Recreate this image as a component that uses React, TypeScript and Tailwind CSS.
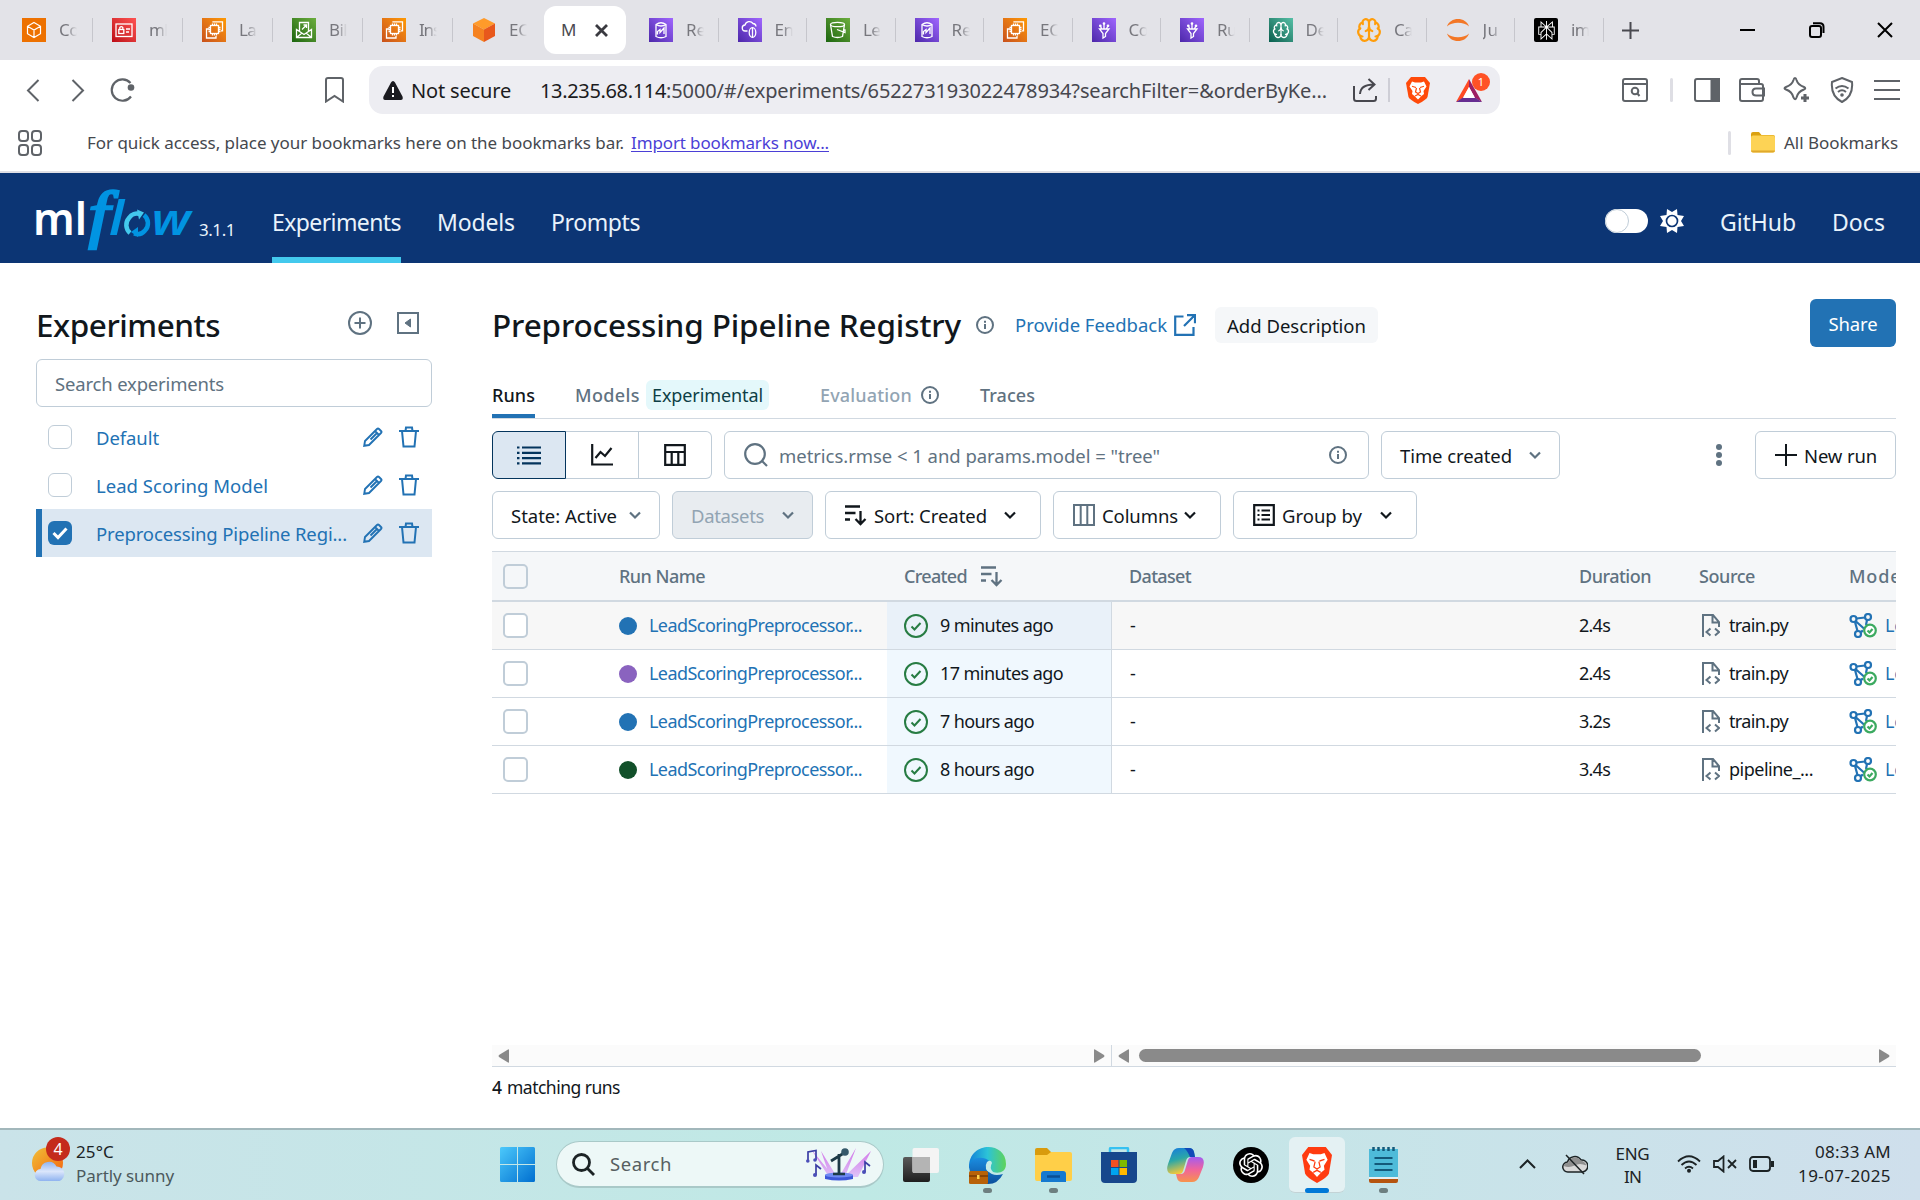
import React, { useLayoutEffect, useRef } from "react";
import { SiOpenai, SiPerplexity } from "react-icons/si";
import { Brain } from "lucide-react";

type P = { children?: React.ReactNode; className?: string };

/* Single-line label whose tracking is adjusted so that it fills width `w`. */
function T({ w, className = "", children }: P & { w: number }) {
  const ref = useRef<HTMLSpanElement>(null);
  useLayoutEffect(() => {
    const el = ref.current;
    if (!el) return;
    el.style.letterSpacing = "0px";
    const n = (el.textContent || "").length;
    el.style.letterSpacing = `${(w - el.getBoundingClientRect().width) / n}px`;
  }, [w]);
  return (
    <span className={"block shrink-0 whitespace-nowrap " + className} style={{ width: w }}>
      <span ref={ref} className="inline-block whitespace-pre">{children}</span>
    </span>
  );
}

function I({ w = 24, h = w, vb, className = "", sw = 2, children }: P & { w?: number; h?: number; vb?: string; sw?: number }) {
  return (
    <svg width={w} height={h} viewBox={vb || `0 0 ${w} ${h}`} fill="none" stroke="currentColor" strokeWidth={sw} className={"block shrink-0 " + className}>
      {children}
    </svg>
  );
}

/* ---------- tab favicons ---------- */
const Chip = ({ className = "" }: P) => (
  <I sw={1.3} className={"text-white bg-linear-to-tr from-[#c8511b] to-[#ff9900] " + className}>
    <rect x="8.5" y="7.5" width="8" height="8" />
    <path d="M10.5 5.5v2M12.5 5.5v2M14.5 5.5v2M10.5 15.5v2M12.5 15.5v2M14.5 15.5v2M6.5 9.5h2M6.5 11.5h2M6.5 13.5h2M16.5 9.5h2M16.5 11.5h2M16.5 13.5h2" />
    <path d="M11 4.500v-.7h9.500v9H19M7 11H4.500v9h9.500v-2" />
  </I>
);
const Cube = () => (
  <I sw={1.2} className="text-white bg-[#ed7100]"><path d="M12 4.500l6.500 3.800v7.400L12 19.500l-6.500-3.800V8.300zM5.500 8.300L12 12l6.500-3.700M12 12v7.500" /></I>
);
const Card = () => (
  <I sw={1.3} className="text-white bg-linear-to-tr from-[#bd0816] to-[#ff5252]"><rect x="4" y="6" width="16" height="12.500" /><rect x="6.800" y="11.500" width="5" height="4" /><path d="M7.800 11.500V9.500q1.500-1.800 3 0v2M14 11h4M14 14h3" /></I>
);
const Mail = () => (
  <I sw={1.3} className="text-white bg-linear-to-tr from-[#1b660f] to-[#6cae3e]"><path d="M7.500 13V4.500h9V13M4.500 11.500v8h15v-8l-7.500 5zM4.500 19.500l5.500-4.500M19.500 19.500L14 15M10 11.500l4.500-4.500M11.500 7h3v3" /></I>
);
const BigCube = () => (
  <I sw={0}><path d="M12 0l11 5.500-11 6L1 5.500z" fill="#ff9b2a" /><path d="M1 5.500l11 6V24L1 18z" fill="#f58220" /><path d="M23 5.500l-11 6V24l11-6z" fill="#e8581c" /></I>
);
const Jar = () => (
  <I sw={1.3} className="text-white bg-linear-to-tr from-[#4d27aa] to-[#a166ff]"><path d="M7 6.500q5-3.500 10 0v12q-5 2.500-10 0zM7 6.500q5 3 10 0M8.500 16.500v-3l2.500-2v3l4-4.500v6" /></I>
);
const CloudI = () => (
  <I sw={1.3} className="text-white bg-linear-to-tr from-[#4d27aa] to-[#a166ff]"><path d="M9.500 13H7.500a3 3 0 01-.5-6 4.500 4.500 0 018-1.500q2.800.2 3 3" /><ellipse cx="14.500" cy="14.500" rx="3.300" ry="4.800" /><path d="M14.500 9.500v10" /></I>
);
const Bucket = () => (
  <I sw={1.3} className="text-white bg-linear-to-tr from-[#1b660f] to-[#6cae3e]"><ellipse cx="11.500" cy="6.500" rx="7" ry="2.200" /><path d="M4.500 6.500l2 12q5 2 10 0l2-12M11 11.500l8 3v-2.500h-2" /></I>
);
const Glue = () => (
  <I sw={1.3} className="text-white bg-linear-to-tr from-[#4d27aa] to-[#a166ff]"><path d="M7.500 11h9.500l-3.500 4.500v3l-2.500 1.500v-4.500zM9.500 10.500L8.500 8M12 10.500V5M14.500 10.500L16 8" /><circle cx="12" cy="5.500" r=".7" /><circle cx="8.300" cy="7.800" r=".7" /><circle cx="16" cy="7.800" r=".7" /></I>
);
const BrainBox = () => (
  <span className="flex size-6 items-center justify-center bg-linear-to-tr from-[#055f4e] to-[#56c0a7] text-white"><Brain size={18} strokeWidth={1.700} /></span>
);
const BrainO = () => <Brain size={26} strokeWidth={2} className="-ml-px shrink-0 text-[#ff9d0a]" />;
const Jup = () => (
  <I sw={0}><path d="M1 8.500C4-1.500 20-1.500 23 8.500 18 3.500 6 3.500 1 8.500zM1 15.500c3 10 19 10 22 0-5 5-17 5-22 0z" fill="#f37726" /></I>
);
const Perp = () => (
  <span className="flex size-6 items-center justify-center rounded-xs bg-black text-white"><SiPerplexity size={19} /></span>
);

function Tab({ icon, t, w, cls, last }: { icon: React.ReactNode; t: string; w: number; cls: string; last?: boolean }) {
  return (
    <div className={"flex h-full shrink-0 items-center pl-[19px] " + cls}>
      <div className="w-6 shrink-0">{icon}</div>
      <div className="ml-[13px] w-[18px] overflow-hidden text-[17px] text-[#77777d] [mask-image:linear-gradient(to_right,#000_45%,transparent)]"><T w={w}>{t}</T></div>
      {!last && <div className="ml-auto h-6 w-px bg-[#c6c6cc]" />}
    </div>
  );
}

const Info = ({ className = "" }: P) => (
  <I w={18} className={className}><circle cx="9" cy="9" r="8" /><path d="M9 8v5M9 4.800v2" /></I>
);
const Chev = ({ className = "" }: P) => <I w={12} h={9} sw={2.200} className={className}><path d="M1 1.500l5 5 5-5" /></I>;
const SortI = () => <I w={22} h={21} sw={2.300}><path d="M0 1.500h15M0 8h10.500M0 14.500h5M15.500 6v13M10.500 14l5 5 5-5" /></I>;
const Pencil = () => <I w={20} h={20} sw={1.900}><path d="M1.200 18.800l.8-4.800L14 2q1-1 2 0l2 2q1 1 0 2L6 18zM12 4l4 4M14 6l-6.500 6.500" /></I>;
const Trash = () => <I w={20} h={22} sw={2}><path d="M0 5h20M3 5l1.500 15.500h11L17 5M6.500 5l.5-3.500h6l.5 3.500" /></I>;

const btn = "flex h-12 shrink-0 items-center rounded-md border border-[#c0cdd8] bg-white text-[18.5px] text-[#11171c] [&>span]:pt-[1.500px] ";

function Exp({ t, w, on }: { t: string; w: number; on?: boolean }) {
  return (
    <div className={"flex h-12 items-center text-[#2272b4] " + (on ? "border-l-[6px] border-[#2272b4] bg-[#dce7f2] pl-1.5" : "pl-3")}>
      {on ? (
        <div className="flex size-6 items-center justify-center rounded-md bg-[#2272b4] text-white"><I w={16} h={13} sw={3}><path d="M1.500 6l4.500 4.500L14.500 1.500" /></I></div>
      ) : (
        <div className="size-6 rounded-md border-[1.500px] border-[#c0cdd8] bg-white" />
      )}
      <T w={w} className="ml-6 pt-[1.500px] text-[18.5px]">{t}</T>
      <div className="mr-[13px] ml-auto flex items-center gap-4"><Pencil /><Trash /></div>
    </div>
  );
}

const rows = [
  { c: "bg-[#2272b4]", a: "9 minutes ago", aw: 113, d: "2.4s", s: "train.py", sw: 59 },
  { c: "bg-[#8a63bf]", a: "17 minutes ago", aw: 123, d: "2.4s", s: "train.py", sw: 59 },
  { c: "bg-[#2272b4]", a: "7 hours ago", aw: 94, d: "3.2s", s: "train.py", sw: 59 },
  { c: "bg-[#12502a]", a: "8 hours ago", aw: 94, d: "3.4s", s: "pipeline_...", sw: 84 },
];

const Box = () => <div className="ml-[11px] size-[25px] shrink-0 rounded-[5px] border-2 border-[#c0cdd8] bg-white" />;
const ArrL = () => <I w={11} h={14} sw={0}><path d="M11 1v12q0 1-1 .5L1 8Q0 7 1 6L10 .5q1-.5 1 .5z" fill="#8a8a8a" /></I>;
const ArrR = () => <I w={11} h={14} sw={0}><path d="M0 1v12q0 1 1 .5L10 8q1-1 0-2L1 .5Q0 0 0 1z" fill="#8a8a8a" /></I>;

function Browser() {
  return (
    <>
      <div className="flex h-[60px] bg-[#e3e3e8] pl-[3px]">
        <Tab cls="w-[90px]" icon={<Cube />} t="Co" w={20} />
        <Tab cls="w-[90px]" icon={<Card />} t="ml" w={19} />
        <Tab cls="w-[90px]" icon={<Chip />} t="La" w={17} />
        <Tab cls="w-[90px]" icon={<Mail />} t="Bil" w={18} />
        <Tab cls="w-[90px]" icon={<Chip />} t="Ins" w={21} />
        <Tab cls="w-[90px]" icon={<BigCube />} t="EC" w={20} last />
        <div className="mt-1.5 ml-px flex h-12 w-[82px] items-center rounded-xl bg-white pl-[17px] text-[#4a4a50]">
          <T w={15} className="text-[17px]">M</T>
          <I w={13} sw={2.800} className="ml-[19px] text-[#3a3a40]"><path d="M1 1l11 11M12 1L1 12" /></I>
        </div>
        <div className="w-1" />
        <Tab cls="w-[88.5px]" icon={<Jar />} t="Re" w={20} />
        <Tab cls="w-[88.5px]" icon={<CloudI />} t="En" w={19} />
        <Tab cls="w-[88.5px]" icon={<Bucket />} t="Le" w={17} />
        <Tab cls="w-[88.5px]" icon={<Jar />} t="Re" w={20} />
        <Tab cls="w-[88.5px]" icon={<Chip />} t="EC" w={20} />
        <Tab cls="w-[88.5px]" icon={<Glue />} t="Co" w={20} />
        <Tab cls="w-[88.5px]" icon={<Glue />} t="Ru" w={20} />
        <Tab cls="w-[88.5px]" icon={<BrainBox />} t="De" w={21} />
        <Tab cls="w-[88.5px]" icon={<BrainO />} t="Ca" w={19} />
        <Tab cls="w-[88.5px]" icon={<Jup />} t="Ju" w={16} />
        <Tab cls="w-[88.5px]" icon={<Perp />} t="im" w={19} />
        <div className="ml-[18px] flex items-center text-[#4a4a50]"><I w={17}><path d="M8.500 0v17M0 8.500h17" /></I></div>
        <div className="ml-[101px] flex items-center text-black">
          <I w={15} h={2}><path d="M0 1h15" /></I>
          <I w={16} h={16} className="ml-[54px]"><rect x="1" y="4" width="11" height="11" rx="2" /><path d="M4 1.200h7q3.500 0 3.500 3.500V11" /></I>
          <I w={16} h={16} className="ml-[52px]"><path d="M1 1l14 14M15 1L1 15" /></I>
        </div>
      </div>

      <div className="flex h-[60px] items-center bg-white pl-[26px] text-[#5f6368]">
        <I w={14} h={23}><path d="M12.500 1L2 11.500 12.500 22" /></I>
        <I w={14} h={23} className="ml-[31px]"><path d="M1.500 1L12 11.500 1.500 22" /></I>
        <I w={26} h={24} sw={2.200} className="ml-6"><path d="M22 18.500A10.700 10.700 0 1 1 21.500 5" /><circle cx="22" cy="9.500" r="3.300" fill="currentColor" stroke="none" /></I>
        <I w={19} h={26} className="ml-[190px]"><path d="M1 3q0-2 2-2h13q2 0 2 2v21.500l-8.500-5.500L1 24.500z" /></I>
        <div className="ml-[25px] flex h-12 w-[1131px] items-center rounded-[14px] bg-[#ededf2] pl-[14px] text-[20px] text-[#1b1b20]">
          <I w={20} h={19} sw={0}><path d="M10 0q1.200 0 2 1.500l7.500 14q1 3.500-1.500 3.500H2Q-.5 19 .5 15.500L8 1.500Q8.800 0 10 0z" fill="#1b1b20" /><path d="M9 6h2v6H9zM9 14h2v2H9z" fill="#fff" /></I>
          <T w={100} className="ml-[8px] pt-px">Not secure</T>
          <T w={126} className="ml-[29px] pt-px">13.235.68.114</T>
          <T w={661} className="pt-px text-[#47474e]">:5000/#/experiments/652273193022478934?searchFilter=&amp;orderByKe...</T>
          <I w={24} h={24} className="ml-[26px] text-[#47474e]"><path d="M1 8v12.500q0 2.500 2.500 2.500h17q2.500 0 2.500-2.500V18M7 16q.5-9.500 14-9.500M15.500 1l6 5.500-6 5.500" /></I>
          <div className="ml-[11px] h-6 w-0.5 bg-[#ceced6]" />
          <svg width="24" height="27" viewBox="0 0 24 27" className="ml-4 shrink-0"><path d="M5 0h14l5 6-2.500 14q-1 2.500-9.500 7-8.500-4.500-9.500-7L0 6z" fill="#ff4a0a" /><path d="M6 4.500l3 1h6l3-1 2.500 5L17.500 14l.5 3-2.500 2L12 22.500 8.500 19 6 17l.5-3-3-4.500z" fill="#fff" /><path d="M6 9.300l4 1.200M18 9.300l-4 1.200M10.500 11l-1 4 2.500 1.500 2.500-1.500-1-4M9 19l3-1.500 3 1.500" stroke="#ff4a0a" strokeWidth="1.200" fill="none" /></svg>
          <div className="relative ml-[26px]">
            <I w={26} h={23} sw={0}><path d="M13 0L0 23l6.500-3.500L13 8z" fill="#ff4a24" /><path d="M13 0l13 23-7-4L13 8z" fill="#9e1f63" /><path d="M0 23h26l-7-4.500H7z" fill="#662d91" /><path d="M13 8l6 11H7z" fill="#fff" /></I>
            <div className="absolute -top-[6px] left-4 flex size-[18px] items-center justify-center rounded-full bg-[#ff5226] text-[11px] leading-none text-white">1</div>
          </div>
        </div>
        <I w={26} h={24} className="ml-[122px]"><rect x="1" y="1" width="24" height="22" rx="2" /><path d="M1 6h24M17.500 18l-2.500-3" /><circle cx="13" cy="13" r="3.300" /></I>
        <div className="ml-[22px] h-6 w-[3px] rounded bg-[#dedee4]" />
        <I w={26} h={24} className="ml-[21px]"><rect x="1" y="1" width="24" height="22" rx="2" /><path d="M17.500 1H25v22h-7.500z" fill="currentColor" /></I>
        <I w={26} h={24} className="ml-[19px]"><path d="M20 6V3q0-2-2-2H3Q1 1 1 3v18q0 2 2 2h19q2 0 2-2V8q0-2-2-2H2M25 10.500h-8q-3.500 0-3.500 3.500t3.500 3.500h8z" /></I>
        <I w={27} h={26} className="ml-[18px]"><path d="M12 1q1 0 1.500 2 1.500 5 7.500 7 2.500 1 0 2.500-6 2-7.500 8-1 3.500-3 0Q9 14.500 3 12.500q-3-1.500 0-2.500 6-2 7.500-7Q11 1 12 1z" /><path d="M22 17v8M18 21h8" strokeWidth={3} /></I>
        <I w={24} h={26} className="ml-5"><path d="M12 1l10 4q1.500 14-10 20Q.5 19 2 5z" /><path d="M5.500 11.500q6.500-5 13 0M8 15q4-3.500 8 0" /><circle cx="12" cy="18" r="1.800" fill="currentColor" stroke="none" /></I>
        <I w={26} h={20} className="ml-5"><path d="M0 1h26M0 10h26M0 19h26" /></I>
      </div>

      <div className="flex h-[53px] items-center border-b-2 border-[#dfdfe5] bg-white pb-[6px] pl-[18px] text-[17px] text-[#45484e]">
        <I w={24} h={26} className="text-[#5f6368]"><rect x="1" y="1" width="9" height="10" rx="3" /><rect x="14" y="1" width="9" height="10" rx="3" /><rect x="1" y="15" width="9" height="10" rx="3" /><rect x="14" y="15" width="9" height="10" rx="3" /></I>
        <T w={537} className="ml-[45px]">For quick access, place your bookmarks here on the bookmarks bar.</T>
        <T w={198} className="ml-[7px] text-[#4b3fd6] [&>span]:underline [&>span]:underline-offset-2">Import bookmarks now...</T>
        <div className="ml-[899px] h-6 w-[3px] rounded bg-[#dfdfe5]" />
        <I w={24} h={21} sw={0} className="ml-5"><path d="M0 2q0-2 2-2h6l2.500 3H22q2 0 2 2v6H0z" fill="#dba111" /><rect y="3.500" width="24" height="17" rx="2" fill="#fdd355" /><path d="M0 18.500h24q0 2-2 2H2q-2 0-2-2z" fill="#e0a92c" /></I>
        <T w={114} className="ml-[9px]">All Bookmarks</T>
      </div>
    </>
  );
}

function Header() {
  return (
    <div className="flex h-[90px] shrink-0 bg-[#0c3574] text-[23px] text-[#e9f3fb]">
      <svg width="160" height="90" viewBox="0 0 160 90" className="ml-[34px] shrink-0" fontFamily="Noto Sans, sans-serif">
        <text x="-1" y="61.500" fontSize="45" fontWeight="600" fill="#fff" textLength="54" lengthAdjust="spacingAndGlyphs">ml</text>
        <text x="54.500" y="61.500" fontSize="63" fontFamily="Liberation Serif, serif" fontStyle="italic" fill="#0194e2" stroke="#0194e2" strokeWidth="2.500" textLength="21" lengthAdjust="spacingAndGlyphs">f</text>
        <text x="75" y="61.500" fontSize="46" fontStyle="italic" fontWeight="600" fill="#0194e2" textLength="15" lengthAdjust="spacingAndGlyphs">l</text>
        <path d="M96 60a10.500 10.500 0 01-1-15A10 10 0 01106 41" fill="none" stroke="#43c9ed" strokeWidth="4.500" />
        <path d="M103 36.500l7 3-5 7z" fill="#43c9ed" />
        <path d="M110 42a10.500 10.500 0 011 15.500 10 10 0 01-11 3" fill="none" stroke="#0194e2" strokeWidth="4.500" />
        <path d="M104 54l-7 5 7 5z" fill="#0194e2" />
        <text x="117.500" y="61.500" fontSize="44" fontStyle="italic" fontWeight="600" fill="#0194e2" textLength="39" lengthAdjust="spacingAndGlyphs">w</text>
      </svg>
      <T w={36} className="mt-[44px] ml-[5px] text-[17px]">3.1.1</T>
      <div className="ml-[37px] flex h-full items-center border-b-6 border-[#43c9ed] pt-[14px]"><T w={129}>Experiments</T></div>
      <div className="ml-9 flex items-center pt-2"><T w={78}>Models</T></div>
      <div className="ml-9 flex items-center pt-2"><T w={89}>Prompts</T></div>
      <div className="ml-auto flex items-center">
        <div className="mt-[5px] flex h-6 w-[43px] rounded-full bg-white"><div className="size-6 rounded-full border-[1.500px] border-[#c0cdd8] bg-white" /></div>
        <svg width="24" height="24" viewBox="0 0 24 24" className="mt-[5px] ml-3"><path d="M12 3l5-3 .5 6L24 7l-3 5 3 5-6.500 1L17 24l-5-3-5 3-.5-6L0 17l3-5-3-5 6.500-1L7 0z" fill="#fff" /><circle cx="12" cy="12" r="5.500" fill="#fff" stroke="#0c3574" strokeWidth="1.700" /></svg>
        <T w={76} className="ml-9 pt-2">GitHub</T>
        <T w={53} className="mr-[35px] ml-9 pt-2">Docs</T>
      </div>
    </div>
  );
}

function Sidebar() {
  return (
    <div className="w-[396px] shrink-0">
      <div className="flex h-12 items-center">
        <T w={184} className="pt-[3px] text-[31.5px] font-medium">Experiments</T>
        <I w={24} className="mb-px ml-32 text-[#5f7281]"><circle cx="12" cy="12" r="11" /><path d="M12 6.500v11M6.500 12h11" /></I>
        <I w={22} className="mb-px ml-[25px] text-[#5f7281]"><path d="M1 1h20v20H1z" /><path d="M13.500 7v8L8 11z" fill="currentColor" strokeWidth="1" /></I>
      </div>
      <div className={btn + "mt-3 mb-1.5 pl-[18px] text-[#5f7281]!"}><T w={169}>Search experiments</T></div>
      <Exp t="Default" w={63} />
      <Exp t="Lead Scoring Model" w={172} />
      <Exp t="Preprocessing Pipeline Regi..." w={251} on />
    </div>
  );
}

function Table() {
  return (
    <div className="mt-3 flex flex-1 flex-col text-[18px]">
      <div className="flex h-[51px] shrink-0 items-center overflow-hidden border-t border-b-2 border-[#d1d9e1] bg-[#f5f7f9] font-medium text-[#5f7281]">
        <div className="ml-[11px] size-[25px] shrink-0 rounded-[5px] border-2 border-[#c0cdd8]" />
        <T w={86} className="ml-[91px]">Run Name</T>
        <T w={63} className="ml-[199px]">Created</T>
        <div className="ml-[14px]"><SortI /></div>
        <T w={62} className="ml-[126px]">Dataset</T>
        <T w={72} className="ml-[388px]">Duration</T>
        <T w={56} className="ml-[48px]">Source</T>
        <T w={58} className="ml-[94px]">Model</T>
      </div>
      {rows.map((r, i) => (
        <div key={i} className={"flex h-12 shrink-0 items-center overflow-hidden border-b border-[#d1d9e1] text-[#11171c] " + (i === 0 ? "bg-[#f7f7f7]" : "bg-white")}>
          <Box />
          <div className={"ml-[91px] size-[18px] shrink-0 rounded-full " + r.c} />
          <T w={213} className="ml-3 text-[#2272b4]">LeadScoringPreprocessor...</T>
          <div className={"ml-[25px] flex h-full w-[225px] shrink-0 items-center border-r border-[#d1d9e1] pl-[17px] " + (i === 0 ? "bg-[#e9f1f9]" : "bg-[#f0f8fe]")}>
            <I w={24} className="text-[#277c43]"><circle cx="12" cy="12" r="11" /><path d="M7.500 12.500l3 3L16.500 9" /></I>
            <T w={r.aw} className="ml-3">{r.a}</T>
          </div>
          <T w={6} className="ml-[18px]">-</T>
          <T w={31} className="ml-[443px]">{r.d}</T>
          <I w={18} h={23} sw={2} className="ml-[92px] text-[#5f7281]"><path d="M1 23V1h10l6 7v5M10.500 1v7.500H17M8.500 14.500l-4 3.500 4 3.500M13 14.500l4 3.500-4 3.500" /></I>
          <div className="ml-[9px] w-[120px] shrink-0"><T w={r.sw}>{r.s}</T></div>
          <I w={28} h={25} sw={2.200} className="text-[#2272b4]"><circle cx="4.500" cy="6" r="3" /><circle cx="19" cy="4" r="3" /><circle cx="9" cy="21" r="3" /><path d="M7.500 5.500l8.500-1M6 9l2.500 9M6.500 8l9 8M18 7l-1 5M12 19l2-1.500" /><circle cx="21" cy="17.500" r="5.800" stroke="#3caa60" fill="#fff" /><path d="M18.500 17.500l2 2 3-3.500" stroke="#3caa60" /></I>
          <T w={50} className="ml-[8px] text-[#2272b4]">LeadS</T>
        </div>
      ))}
      <div className="mt-[251px] flex h-[22px] shrink-0 items-center border-b border-[#d1d9e1] bg-[#fbfbfb] pl-1.5">
        <ArrL />
        <div className="ml-[585px]"><ArrR /></div>
        <div className="ml-[6px] h-full w-px bg-[#d1d9e1]" />
        <div className="ml-[6px]"><ArrL /></div>
        <div className="ml-[10px] h-[13px] w-[562px] rounded-full bg-[#8a8a8a]" />
        <div className="ml-[178px]"><ArrR /></div>
      </div>
      <div className="mt-[7px] flex text-[17.5px]"><T w={10} className="font-medium">4</T><T w={113} className="ml-[5px]">matching runs</T></div>
    </div>
  );
}

function Main() {
  return (
    <div className="ml-[60px] flex w-[1404px] shrink-0 flex-col">
      <div className="flex h-12 items-center text-[18.5px]">
        <T w={469} className="pt-[3px] text-[31.5px] font-medium">Preprocessing Pipeline Registry</T>
        <Info className="mt-[3px] ml-[15px] text-[#5f7281]" />
        <T w={152} className="mt-1 ml-[21px] text-[#2272b4]">Provide Feedback</T>
        <I w={22} sw={2.200} className="mt-[3px] ml-[7px] text-[#2272b4]"><path d="M9.500 2.500H1.200v18.300h18.300V13M13 1.200h8v8M21 1L10 12" /></I>
        <div className="mt-1 ml-[19px] flex h-9 w-[163px] items-center justify-center rounded-md bg-[#f5f7f9]"><T w={139} className="pt-px">Add Description</T></div>
        <div className="ml-auto flex h-12 w-[86px] items-center justify-center rounded-md bg-[#2272b4] text-white"><T w={49} className="pt-px">Share</T></div>
      </div>

      <div className="flex h-[72px] items-start border-b border-[#d1d9e1] pt-[33px] text-[18px] font-medium text-[#5f7281]">
        <div className="flex flex-col text-[#11171c]"><div className="flex h-[30px] items-center pt-px"><T w={43}>Runs</T></div><div className="mt-1 h-1 bg-[#2272b4]" /></div>
        <div className="ml-10 flex h-[30px] items-center">
          <T w={65} className="pt-[1.500px]">Models</T>
          <div className="ml-[6px] flex h-[30px] w-[123px] items-center justify-center rounded-md bg-[#e4f8fb] font-normal text-[#0e3f46]"><T w={111} className="pt-[1.500px]">Experimental</T></div>
          <T w={92} className="ml-[51px] pt-[1.500px] text-[#92a4b3]">Evaluation</T>
          <Info className="ml-[9px]" />
          <T w={55} className="ml-[41px] pt-[1.500px]">Traces</T>
        </div>
      </div>

      <div className="mt-3 flex">
        <div className="flex h-12 w-[220px] text-[#11171c]">
          <div className="flex w-[74px] items-center justify-center rounded-l-md border border-[#04355d] bg-[#dce7f2] text-[#04355d]"><I w={24} h={19} sw={2.200}><path d="M5 1.500h19M5 6.800h19M5 12.100h19M5 17.400h19M0 1.500h2.500M0 6.800h2.500M0 12.100h2.500M0 17.400h2.500" /></I></div>
          <div className="flex w-[73px] items-center justify-center border-y border-r border-[#c0cdd8]"><I w={22} h={22} sw={2.200}><path d="M1.200 0v20.500H22M4.500 14l5-6 4.500 4 6.500-8" /></I></div>
          <div className="flex w-[73px] items-center justify-center rounded-r-md border-y border-r border-[#c0cdd8]"><I w={22} h={22} sw={2.200}><path d="M1.200 1.200h19.600v19.600H1.200zM1.200 8h19.600M7.700 8v12.800M14.300 8v12.800" /></I></div>
        </div>
        <div className={btn + "ml-3 w-[645px] pl-[19px] text-[#5f7281]!"}>
          <I w={24} h={24} sw={2.200}><circle cx="11" cy="11" r="9.800" /><path d="M17.500 17.500l5.500 5.500" /></I>
          <T w={381} className="ml-[11px]">metrics.rmse &lt; 1 and params.model = "tree"</T>
          <Info className="mr-[21px] ml-auto" />
        </div>
        <div className={btn + "ml-3 w-[179px] pl-[18px]"}><T w={112}>Time created</T><Chev className="ml-[17px] text-[#5f7281]" /></div>
        <I w={6} h={48} sw={0} className="ml-[156px]"><g fill="#5f7281"><circle cx="3" cy="16" r="3" /><circle cx="3" cy="24" r="3" /><circle cx="3" cy="32" r="3" /></g></I>
        <div className={btn + "ml-auto w-[141px] pl-[19px]"}><I w={22}><path d="M11 0v22M0 11h22" /></I><T w={73} className="ml-[7px]">New run</T></div>
      </div>

      <div className="mt-3 flex gap-3">
        <div className={btn + "w-[168px] pl-[18px]"}><T w={106}>State: Active</T><Chev className="ml-[12px] text-[#5f7281]" /></div>
        <div className={btn + "w-[141px] bg-[#e8ecf0]! pl-[18px] text-[#92a4b3]!"}><T w={73}>Datasets</T><Chev className="ml-[18px] text-[#5f7281]" /></div>
        <div className={btn + "w-[216px] pl-[19px]"}><SortI /><T w={113} className="ml-[7px]">Sort: Created</T><Chev className="ml-[17px]" /></div>
        <div className={btn + "w-[168px] pl-[19px]"}><I w={22} className="text-[#5f7281]"><path d="M1 1h20v20H1zM7.700 1v20M14.300 1v20" /></I><T w={76} className="ml-[7px]">Columns</T><Chev className="ml-[6px]" /></div>
        <div className={btn + "w-[184px] pl-[19px]"}><I w={22} sw={2.200}><path d="M1.200 1.200h19.600v19.600H1.200zM8.500 6.500H17M8.500 11H17M8.500 15.500H17M4.500 6.500h2M4.500 11h2M4.500 15.500h2" /></I><T w={80} className="ml-[7px]">Group by</T><Chev className="ml-[18px]" /></div>
      </div>
      <Table />
    </div>
  );
}

function TaskIcon({ dot, bar, children, className = "" }: P & { dot?: boolean; bar?: boolean }) {
  return (
    <div className={"relative flex h-14 w-[66px] shrink-0 items-center justify-center " + className}>
      {children}
      {dot && <div className="absolute bottom-0 left-[29px] h-[5px] w-[9px] rounded-full bg-[#6d7f80]" />}
      {bar && <div className="absolute bottom-0 left-[21px] h-[5px] w-6 rounded-full bg-[#0078d7]" />}
    </div>
  );
}

function Taskbar() {
  return (
    <div className="flex h-[72px] border-t-2 border-[#a2b7bb] bg-linear-to-r from-[#cae3e9] via-[#bfe9e5] via-45% to-[#cfdfec] text-[#1c2325]">
      <div className="relative ml-8 mt-[7px] w-[38px]">
        <svg width="38" height="46" viewBox="0 0 38 46">
          <defs><linearGradient id="sun" x2="1" y2="1"><stop stopColor="#f0c038" /><stop offset="1" stopColor="#f4600c" /></linearGradient><linearGradient id="cl" y2="1" x2="0"><stop stopColor="#8fb3f0" /><stop offset=".5" stopColor="#dbe6fb" /><stop offset="1" stopColor="#8fb3f0" /></linearGradient></defs>
          <circle cx="15.500" cy="26" r="15.500" fill="url(#sun)" />
          <path d="M9 44a6 6 0 01-.5-12 8.500 8.500 0 0116-2.500 7.500 7.500 0 013 14.500z" fill="url(#cl)" />
        </svg>
        <div className="absolute top-0 left-[14px] flex size-6 items-center justify-center rounded-full bg-[#c42b1c] text-[16px] leading-none text-white">4</div>
      </div>
      <div className="mt-[10px] ml-[6px] w-[100px] text-[17px] leading-6"><T w={38}>25°C</T><T w={98} className="text-[#4c595c]">Partly sunny</T></div>
      <svg width="35" height="35" viewBox="0 0 35 35" className="mt-[17px] ml-[324px] shrink-0">
        <defs><linearGradient id="win" x2="1" y2="1"><stop stopColor="#4cc9fb" /><stop offset="1" stopColor="#006fd0" /></linearGradient></defs>
        <path d="M1.500 0H17v17H0V1.500Q0 0 1.500 0zM18 0h15.500Q35 0 35 1.500V17H18zM0 18h17v17H1.500Q0 35 0 33.500zM18 18h17v15.500q0 1.500-1.500 1.500H18z" fill="url(#win)" />
      </svg>
      <div className="mt-[11px] ml-[21px] flex h-[47px] w-[328px] shrink-0 items-center rounded-full border border-b-2 border-[#a9c9c8] bg-[#edf8f7] pl-[15px]">
        <I w={23} h={23} sw={2.800}><circle cx="9.500" cy="9.500" r="8" /><path d="M15 15l7 7" /></I>
        <T w={62} className="ml-[15px] text-[18.5px] text-[#575f61]">Search</T>
        <svg width="67" height="34" viewBox="0 0 67 34" className="ml-[134px] shrink-0">
          <defs><linearGradient id="beam" x2="0" y2="1"><stop stopColor="#d070e8" /><stop offset="1" stopColor="#dfc4f7" /></linearGradient></defs>
          <path d="M5 2l18 28h5zM15 4l9 26h7zM50 1L33 30h6zM65 4L38 30h14z" fill="url(#beam)" />
          <path d="M2 14V5l8-1.500V13M10 28V18l5 4M59 25V15l5 4" fill="none" stroke="#3b3fa5" strokeWidth="1.700" />
          <circle cx="1.800" cy="14" r="1.800" fill="#4a4eb8" /><circle cx="9" cy="13" r="1.800" fill="#4a4eb8" /><circle cx="9" cy="28" r="2" fill="#4a4eb8" /><circle cx="58" cy="25" r="2" fill="#4a4eb8" />
          <path d="M19 28v4q14 3 28 0v-4z" fill="#3c57d8" /><ellipse cx="33" cy="28" rx="14" ry="2.600" fill="#6f8bf2" />
          <path d="M33 7v20M25 14L38 6" stroke="#1d3b47" strokeWidth="2.800" /><circle cx="39" cy="5" r="3.800" fill="#35596a" /><path d="M27 27h12" stroke="#1d3b47" strokeWidth="2.500" />
        </svg>
      </div>
      <div className="mt-[7px] ml-[4px] flex h-14 shrink-0">
        <TaskIcon>
          <svg width="36" height="35" viewBox="0 0 36 35"><defs><linearGradient id="tv" y2="1" x2="0"><stop stopColor="#5a5a5a" /><stop offset="1" stopColor="#1e1e1e" /></linearGradient></defs><rect y="9" width="27" height="25" rx="2" fill="url(#tv)" /><rect x="9.500" width="26.500" height="25" rx="2" fill="#f4f4f4" /><path d="M9.500 9H27v16H11q-1.500 0-1.500-1.500z" fill="#b4b4b4" /></svg>
        </TaskIcon>
        <TaskIcon dot>
          <svg width="37" height="37" viewBox="0 0 37 37"><defs><linearGradient id="ed" x2="1" y2="0"><stop stopColor="#1180d8" /><stop offset=".5" stopColor="#2cc3d8" /><stop offset="1" stopColor="#5fd35a" /></linearGradient><linearGradient id="ee" x2="0" y2="1"><stop stopColor="#1b8de0" /><stop offset="1" stopColor="#0c4f9c" /></linearGradient></defs><path d="M0 20C0-6 37-6 37 17c0 8-7 10-13 8-4-1-4-3-3-7-3-8-15-8-18 6z" fill="url(#ed)" /><path d="M0 20q3-11 14-9 6 1 7 5-4 3-2 8 5 6 15 3-5 10-15 10Q2 36 0 20z" fill="url(#ee)" /><path d="M18 15q4-3 5 1-3 5 1 9-5 1-7-3-1-4 1-7z" fill="#c6ebe8" /><rect y="24" width="19" height="13" rx="1.500" fill="#b86209" /><path d="M0 29h19" stroke="#7d3d05" strokeWidth="1.500" fill="none" /><rect x="8" y="28" width="2.500" height="4" fill="#ffd34d" /></svg>
        </TaskIcon>
        <TaskIcon dot>
          <svg width="37" height="34" viewBox="0 0 37 34"><path d="M0 2q0-2 2-2h10l4 4h19v6H0z" fill="#d99b0c" /><path d="M0 7h12l4-3h19q2 0 2 2v25q0 2-2 2H2q-2 0-2-2z" fill="#ffcf48" /><path d="M6 34V26q0-3 3-3h19q3 0 3 3v8z" fill="#1579cf" /><path d="M12 28.500h13" stroke="#0a4f94" strokeWidth="2.500" /></svg>
        </TaskIcon>
        <TaskIcon>
          <svg width="36" height="36" viewBox="0 0 36 36"><path d="M9 7V2q0-1 1-1h16q1 0 1 1v5" fill="none" stroke="#35c1f1" strokeWidth="2.500" /><path d="M0 5h36v27q0 4-4 4H4q-4 0-4-4z" fill="#17478c" /><path d="M10 13h7.500v7H10z" fill="#f25022" /><path d="M18.500 13H26v7h-7.500z" fill="#7fba00" /><path d="M10 21h7.500v7H10z" fill="#00a4ef" /><path d="M18.500 21H26v7h-7.500z" fill="#ffb900" /></svg>
        </TaskIcon>
        <TaskIcon>
          <svg width="37" height="34" viewBox="0 0 37 34"><defs><linearGradient id="ca" x2=".3" y2="1"><stop stopColor="#1679e0" /><stop offset=".5" stopColor="#2aa7a8" /><stop offset="1" stopColor="#f2c73a" /></linearGradient><linearGradient id="cb" x2="0" y2="1"><stop stopColor="#a35cf0" /><stop offset=".5" stopColor="#f0649c" /><stop offset="1" stopColor="#f7934c" /></linearGradient></defs><path d="M12 0h10q4 0 5 4l1 5h-5q-3 0-4 4l-3 10q-1 3-4 3H6Q-2 26 1 16L5 5q2-5 7-5z" fill="url(#ca)" /><path d="M25 34H15q-4 0-5-4l-1-4h5q3 0 4-4l3-10q1-3 4-3h6q8 0 5 10l-4 10q-2 5-7 5z" fill="url(#cb)" /><path d="M17 0h5q4 0 5 4l1 5h-5q-3-7-6-9z" fill="#1149b8" /></svg>
        </TaskIcon>
        <TaskIcon><div className="flex size-9 items-center justify-center rounded-full bg-black text-white"><SiOpenai size={24} /></div></TaskIcon>
        <TaskIcon bar><div className="flex h-14 w-14 items-center justify-center rounded-md border-b border-[#c3d3d6] bg-[#e4f1f3]"><svg width="30" height="36" viewBox="0 0 24 27" preserveAspectRatio="none"><path d="M5 0h14l5 6-2.500 14q-1 2.500-9.500 7-8.500-4.500-9.500-7L0 6z" fill="#ff3b10" /><path d="M6 4.500l3 1h6l3-1 2.500 5L17.500 14l.5 3-2.500 2L12 22.500 8.500 19 6 17l.5-3-3-4.500z" fill="#fff" /><path d="M6 9.300l4 1.200M18 9.300l-4 1.200M10.500 11l-1 4 2.500 1.500 2.500-1.500-1-4M9 19l3-1.500 3 1.500" stroke="#ff3b10" strokeWidth="1" fill="none" /></svg></div></TaskIcon>
        <TaskIcon dot>
          <svg width="29" height="36" viewBox="0 0 29 36"><path d="M0 2h29v28H0z" fill="#4ebbd9" /><path d="M0 30h29v2H0z" fill="#e8eff0" /><path d="M0 32h29v2q0 2-2 2H2q-2 0-2-2z" fill="#b5540f" /><path d="M4.500 0v4M9.500 0v4M14.500 0v4M19.500 0v4M24.500 0v4" stroke="#13597a" strokeWidth="2.500" /><path d="M5.500 11h18M5.500 17h18M5.500 23h18" stroke="#13597a" strokeWidth="2" /></svg>
        </TaskIcon>
      </div>
      <div className="ml-auto flex items-start pr-[29px]">
        <I w={17} h={10} className="mt-[29px]"><path d="M1 9l7.500-7.500L16 9" /></I>
        <I w={26} h={21} sw={1.500} className="mt-[24px] ml-[26px]"><path d="M6 18a5 5 0 01-.5-10A7.500 7.500 0 0119 6a6 6 0 011.500 12z" fill="#d8d8d8" stroke="#1c2325" /><path d="M1.500 12q2-3.500 5-3.500A7 7 0 0119 6.500q4 1 5.500 5-7-3-12 0-5 2.500-11 .5z" fill="#8f8f8f" stroke="none" /><path d="M4 1l18 19" /></I>
        <div className="mt-3 ml-[27px] flex w-[35px] flex-col items-center text-[17px] leading-[23px]"><T w={34}>ENG</T><T w={17}>IN</T></div>
        <I w={24} h={18} sw={1.800} className="mt-[25px] ml-[27px]"><path d="M1 6.500q11-10.500 22 0M4.500 10q7.500-7 15 0M8 13.500q4-3.500 8 0" /><circle cx="12" cy="15.800" r="2" fill="currentColor" stroke="none" /></I>
        <I w={24} h={18} sw={1.800} className="mt-[25px] ml-3"><path d="M1 6h4l5.500-4.500v15L5 12H1zM15 5l8 8M23 5l-8 8" /></I>
        <I w={25} h={16} sw={1.800} className="mt-[26px] ml-3"><rect x="1" y="1" width="20" height="14" rx="3" /><path d="M4 4h4v8H4z" fill="currentColor" stroke="none" /><path d="M23.500 5v6" strokeWidth="3" /></I>
        <div className="mt-[10px] ml-[24px] flex w-[93px] flex-col items-end text-[17px] leading-6"><T w={76}>08:33 AM</T><T w={93}>19-07-2025</T></div>
      </div>
    </div>
  );
}

export default function App() {
  return (
    <div className="flex h-[1200px] w-[1920px] flex-col overflow-hidden bg-white font-['Noto_Sans',sans-serif] text-[#11171c]">
      <Browser />
      <Header />
      <div className="flex min-h-0 flex-1 overflow-hidden pt-9 pl-9">
        <Sidebar />
        <Main />
      </div>
      <Taskbar />
    </div>
  );
}
